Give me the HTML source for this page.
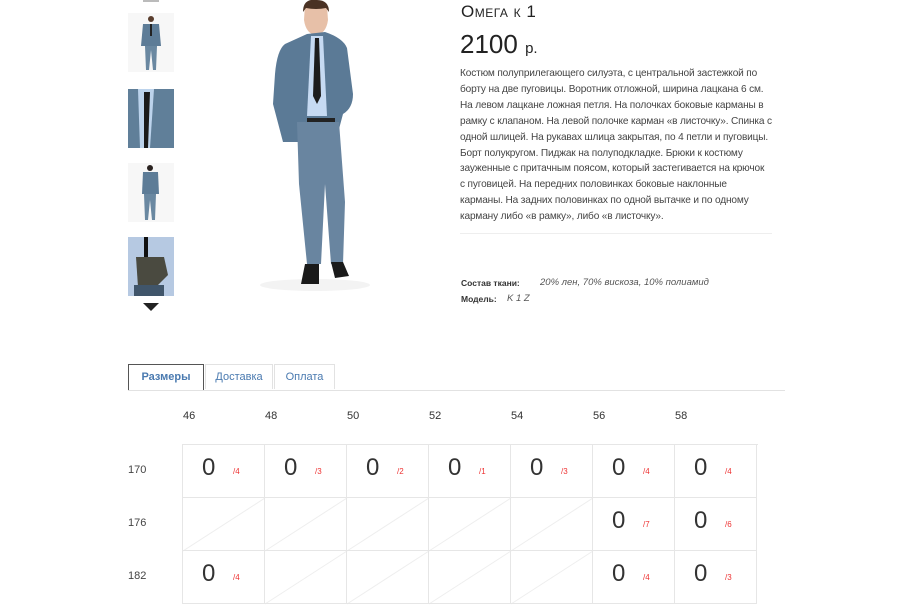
<!DOCTYPE html>
<html><head><meta charset="utf-8"><style>
*{margin:0;padding:0;box-sizing:border-box}
body{width:903px;height:602px;background:#fff;font-family:"Liberation Sans","DejaVu Sans",sans-serif;color:#333;position:relative;overflow:hidden}
.a{position:absolute}
.th{position:absolute;left:128px;width:46px;height:59px;background:#f7f7f7;overflow:hidden}
.desc{left:460px;top:66px;font-size:10.1px;line-height:15.9px;color:#444;white-space:nowrap;letter-spacing:-0.15px}
.tab{position:absolute;top:364px;height:25px;border:1px solid #e2e2e2;border-bottom:none;font-size:11px;color:#4a7ab0;text-align:center;line-height:24px}
.cell{position:absolute;width:82px;height:53px;border-right:1px solid #e6e6e6;border-bottom:1px solid #e6e6e6}
.z{position:absolute;left:19px;top:9px;font-size:24px;color:#333}
.r{position:absolute;left:50px;top:22px;font-size:8px;color:#e33}
.hd{position:absolute;top:410px;font-size:11px;color:#333}
.rw{position:absolute;left:128px;font-size:11px;color:#444}
</style></head><body>
<div class="a" style="left:143px;top:0;width:16px;height:2px;background:#bbb"></div>
<div class="th" style="top:13px"><svg width="46" height="59"><circle cx="23" cy="6" r="3" fill="#5a3e2e"/><path d="M15 11h16l2 22h-20z" fill="#5d7c97"/><rect x="22" y="11" width="2" height="12" fill="#222"/><path d="M17 33h12l-1 24h-3l-2-20-2 20h-3z" fill="#6a88a1"/></svg></div>
<div class="th" style="top:89px;background:#607f99"><svg width="46" height="59"><path d="M10 0h16l-4 59h-10z" fill="#bcd3ec"/><path d="M16 3h6l-2 56h-4z" fill="#1a1a1a"/></svg></div>
<div class="th" style="top:163px"><svg width="46" height="59"><circle cx="22" cy="5" r="3" fill="#2a2220"/><path d="M15 9h15l1 22h-17z" fill="#5d7c97"/><path d="M16 31h12l-1 26h-3l-2-20-2 20h-3z" fill="#6a88a1"/></svg></div>
<div class="th" style="top:237px;background:#b6c9e2"><svg width="46" height="59"><rect x="16" y="0" width="4" height="20" fill="#111"/><path d="M8 20h28l4 18-12 12h-18z" fill="#4a4a40"/><rect x="6" y="48" width="30" height="11" fill="#40556a"/></svg></div>
<svg class="a" style="left:143px;top:303px" width="16" height="8"><path d="M0 0h16l-8 8z" fill="#222"/></svg>
<svg class="a" style="left:245px;top:0" width="130" height="292">
<ellipse cx="70" cy="285" rx="55" ry="6" fill="#f3f3f3"/>
<path d="M60 4q12-6 22 2l1 14q-2 14-12 15q-10-1-12-15z" fill="#e7c0a8"/><path d="M58 12q0-14 14-12q12 0 12 12l-3-4q-10 2-20 0z" fill="#4a3224"/>
<path d="M62 34l-22 10q-8 6-10 30l-2 30 10 38h18l2-10h30l2 12 8-30q10-6 10-20l-6-46q-4-10-22-16z" fill="#5b7a96"/>
<path d="M66 36l12 0 4 80h-20z" fill="#c6daf2"/><path d="M70 38h4l2 58-4 8-4-8z" fill="#1c1c1c"/>
<rect x="62" y="118" width="28" height="5" fill="#222"/>
<path d="M52 122h42l6 80-2 62h-12l-6-80-4 80h-14l-8-80z" fill="#6985a0"/>
<path d="M60 264h14l0 20h-18z M86 262h12l6 14-14 2z" fill="#1a1a1a"/>
</svg>
<div class="a" style="left:461px;top:2px;font-size:17px;letter-spacing:.5px;color:#222;font-variant:small-caps">Омега к 1</div>
<div class="a" style="left:460px;top:29px;font-size:26px;color:#222">2100 <span style="font-size:15px">р.</span></div>
<div class="a desc">Костюм полуприлегающего силуэта, с центральной застежкой по<br>борту на две пуговицы. Воротник отложной, ширина лацкана 6 см.<br>На левом лацкане ложная петля. На полочках боковые карманы в<br>рамку с клапаном. На левой полочке карман «в листочку». Спинка с<br>одной шлицей. На рукавах шлица закрытая, по 4 петли и пуговицы.<br>Борт полукругом. Пиджак на полуподкладке. Брюки к костюму<br>зауженные с притачным поясом, который застегивается на крючок<br>с пуговицей. На передних половинках боковые наклонные<br>карманы. На задних половинках по одной вытачке и по одному<br>карману либо «в рамку», либо «в листочку».</div>
<div class="a" style="left:460px;top:233px;width:312px;height:1px;background:#eee"></div>
<div class="a" style="left:461px;top:278px;font-size:8.5px;font-weight:bold;color:#333">Состав ткани:</div>
<div class="a" style="left:540px;top:277px;font-size:9.5px;font-style:italic;color:#555">20% лен, 70% вискоза, 10% полиамид</div>
<div class="a" style="left:461px;top:294px;font-size:8.5px;font-weight:bold;color:#333">Модель:</div>
<div class="a" style="left:507px;top:293px;font-size:9.5px;font-style:italic;color:#555">K 1 Z</div>
<div class="tab" style="left:128px;width:76px;border:1px solid #555;border-bottom:none;background:#fff;font-weight:bold;height:26px">Размеры</div>
<div class="tab" style="left:205px;width:68px">Доставка</div>
<div class="tab" style="left:274px;width:61px">Оплата</div>
<div class="a" style="left:128px;top:390px;width:657px;height:1px;background:#e2e2e2"></div>
<div class="hd" style="left:183px">46</div><div class="hd" style="left:265px">48</div><div class="hd" style="left:347px">50</div><div class="hd" style="left:429px">52</div><div class="hd" style="left:511px">54</div><div class="hd" style="left:593px">56</div><div class="hd" style="left:675px">58</div>
<div class="rw" style="top:464px">170</div><div class="rw" style="top:517px">176</div><div class="rw" style="top:570px">182</div>
<div class="a" style="left:182px;top:444px;width:576px;height:160px;border-left:1px solid #e6e6e6;border-top:1px solid #e6e6e6">
<svg class="a" style="left:0;top:53px" width="575" height="107"><g stroke="#eee" stroke-width="1"><path d="M0 53L82 0M82 53L164 0M164 53L246 0M246 53L328 0M328 53L410 0M82 106L164 53M164 106L246 53M246 106L328 53M328 106L410 53"/></g></svg>
</div>
<div id="g"></div>
<script>
var d=[["4","3","2","1","3","4","4"],[null,null,null,null,null,"7","6"],["4",null,null,null,null,"4","3"]],h="";
for(var r=0;r<3;r++)for(var c=0;c<7;c++){h+='<div class="cell" style="left:'+(183+c*82)+'px;top:'+(445+r*53)+'px">'+(d[r][c]?'<span class="z">0</span><span class="r">/'+d[r][c]+'</span>':'')+'</div>';}
document.getElementById("g").innerHTML=h;
</script>
</body></html>
